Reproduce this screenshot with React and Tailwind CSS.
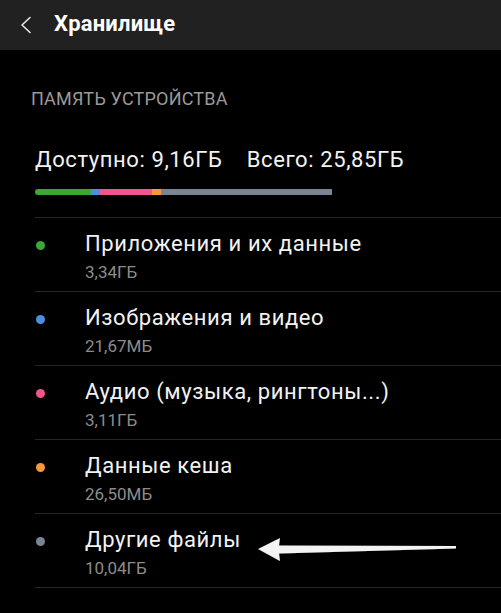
import React from "react";

const items = [
  { title: "Приложения и их данные", size: "3,34ГБ", color: "bg-[#3ca834]" },
  { title: "Изображения и видео", size: "21,67МБ", color: "bg-[#4b8ee4]" },
  { title: "Аудио (музыка, рингтоны...)", size: "3,11ГБ", color: "bg-[#f0558f]" },
  { title: "Данные кеша", size: "26,50МБ", color: "bg-[#f7963a]" },
  { title: "Другие файлы", size: "10,04ГБ", color: "bg-[#7b8493]" },
];

export default function App() {
  return (
    <div className="relative w-[501px] h-[613px] bg-black overflow-hidden" style={{ fontFamily: "Roboto, 'Noto Sans', sans-serif" }}>
      <div className="h-[50px] bg-[#212121] flex items-center">
        <svg className="ml-[19px] w-[13px] h-[18px]" viewBox="0 0 13 18" fill="none">
          <path d="M11 1.5 L3 9 L11 16.5" stroke="#e8e8e8" strokeWidth="1.6" strokeLinecap="round" strokeLinejoin="round" />
        </svg>
        <div className="ml-[22px] text-[22px] leading-[26px] font-bold text-white mb-[2px] tracking-[0.2px]">Хранилище</div>
      </div>

      <div className="pl-[31px] pt-[38px] text-[18px] leading-[22px] text-[#9a9a9a] tracking-[0.2px]">ПАМЯТЬ УСТРОЙСТВА</div>

      <div className="pl-[35px] pt-[37px] text-[22px] leading-[26px] text-[#f2f2f2] whitespace-pre tracking-[0.6px]">
        Доступно: 9,16ГБ    Всего: 25,85ГБ
      </div>

      <div className="ml-[35px] mt-[16px] w-[297px] h-[6px] flex rounded-l-full overflow-hidden">
        <div className="w-[56px] bg-[#3ca834]" />
        <div className="w-[9px] bg-[#4b8ee4]" />
        <div className="w-[52px] bg-[#f0558f]" />
        <div className="w-[9px] bg-[#f7963a]" />
        <div className="flex-1 bg-[#7b8493]" />
      </div>

      <div className="ml-[35px] mt-[22px]">
        {items.map((it) => (
          <div key={it.title} className="border-t border-[#262626] h-[74px] flex">
            <div className="w-[50px] pt-[23px]">
              <div className={`w-[9px] h-[9px] rounded-full ml-[1px] ${it.color}`} />
            </div>
            <div className="pt-[13px]">
              <div className="text-[22px] leading-[26px] text-[#f2f2f2] tracking-[0.6px]">{it.title}</div>
              <div className="mt-[5px] text-[17px] leading-[20px] text-[#8c8c8c]">{it.size}</div>
            </div>
          </div>
        ))}
        <div className="border-t border-[#262626]" />
      </div>

      <svg className="absolute left-0 top-0 pointer-events-none" width="501" height="613" viewBox="0 0 501 613">
        <defs>
          <filter id="sh" x="-10%" y="-50%" width="120%" height="200%">
            <feGaussianBlur in="SourceAlpha" stdDeviation="1.5" />
            <feOffset dx="0" dy="1" result="b" />
            <feComponentTransfer><feFuncA type="linear" slope="0.5" /></feComponentTransfer>
            <feMerge><feMergeNode /><feMergeNode in="SourceGraphic" /></feMerge>
          </filter>
        </defs>
        <polygon
          points="258,549 280,538 279,545.5 456,546 456,548.5 279,553.5 280,561"
          fill="#f3f3f3"
          filter="url(#sh)"
        />
      </svg>
    </div>
  );
}
